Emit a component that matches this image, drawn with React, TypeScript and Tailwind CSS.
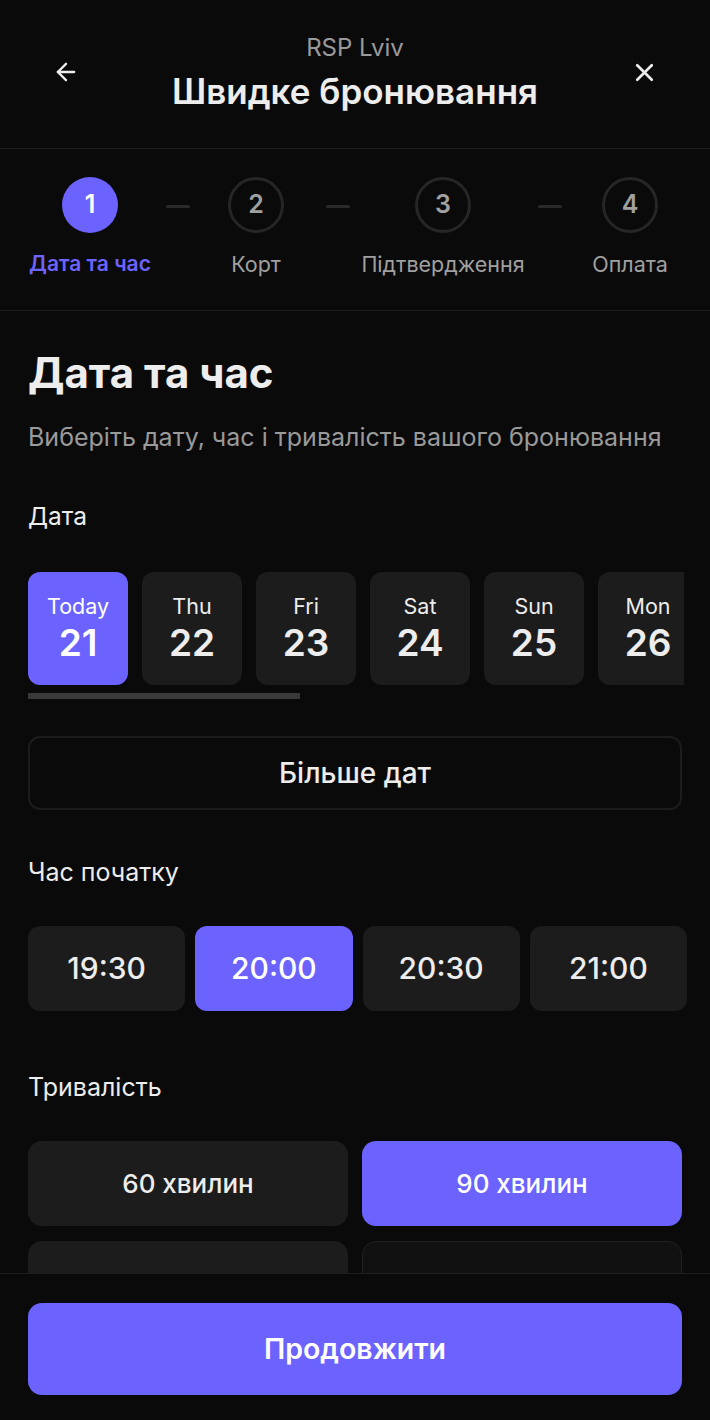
import { ArrowLeft, X } from "lucide-react";

const steps = [
  { n: 1, label: "Дата та час", w: "w-[122px]", ml: "" },
  { n: 2, label: "Корт", w: "w-[80px]", ml: "ml-[26px]" },
  { n: 3, label: "Підтвердження", w: "w-[170px]", ml: "ml-[8px]" },
  { n: 4, label: "Оплата", w: "w-[78px]", ml: "ml-[29px]" },
];
const dashMl = ["ml-[15px]", "ml-[30px]", "ml-[10px]"];

const dates = [
  { day: "Today", num: 21, active: true },
  { day: "Thu", num: 22 },
  { day: "Fri", num: 23 },
  { day: "Sat", num: 24 },
  { day: "Sun", num: 25 },
  { day: "Mon", num: 26 },
  { day: "Tue", num: 27 },
];

const times = ["19:30", "20:00", "20:30", "21:00"];

export default function App() {
  return (
    <div className="h-[1420px] w-[710px] flex flex-col overflow-hidden bg-[#0a0a0a] text-[#ededed] font-['Inter',sans-serif]">
      {/* Header */}
      <header className="h-[149px] shrink-0 border-b border-[#1f1f1f] flex items-center px-[42px] pb-[4px]">
        <button className="w-[48px] h-[48px] flex items-center justify-center text-[#ededed]">
          <ArrowLeft size={28} strokeWidth={2} />
        </button>
        <div className="flex-1 flex flex-col items-center">
          <span className="text-[24px] leading-[30px] text-[#9a9a9a]">RSP Lviv</span>
          <h1 className="text-[35px] leading-[42px] font-semibold mt-[7px]">Швидке бронювання</h1>
        </div>
        <button className="w-[48px] h-[48px] flex items-center justify-center text-[#ededed]">
          <X size={29} strokeWidth={2.2} />
        </button>
      </header>

      {/* Stepper */}
      <div className="h-[162px] shrink-0 border-b border-[#1f1f1f] flex items-start pl-[29px] pt-[28px]">
        {steps.map((s, i) => (
          <div key={s.n} className="flex items-start">
            {i > 0 && <div className={`${dashMl[i - 1]} mt-[28px] w-[24px] h-[3px] bg-[#2a2a2a] rounded`} />}
            <div className={`${s.w} ${s.ml} flex flex-col items-center`}>
              <div
                className={
                  s.n === 1
                    ? "w-[56px] h-[56px] rounded-full bg-[#6c63ff] text-white flex items-center justify-center text-[25px] font-semibold"
                    : "w-[56px] h-[56px] rounded-full border-[3px] border-[#262626] text-[#a0a0a0] flex items-center justify-center text-[25px] font-semibold"
                }
              >
                {s.n}
              </div>
              <span
                className={
                  s.n === 1
                    ? "mt-[16px] text-[21px] leading-[30px] font-semibold text-[#6c63ff] whitespace-nowrap"
                    : "mt-[16px] text-[21.5px] leading-[30px] text-[#a0a0a0] whitespace-nowrap"
                }
              >
                {s.label}
              </span>
            </div>
          </div>
        ))}
      </div>

      {/* Content */}
      <main className="flex-1 overflow-hidden px-[28px] pt-[36px]">
        <h2 className="text-[42px] leading-[52px] font-bold">Дата та час</h2>
        <p className="mt-[22px] text-[25px] leading-[32px] text-[#9a9a9a]">
          Виберіть дату, час і тривалість вашого бронювання
        </p>

        <h3 className="mt-[47px] text-[24.5px] leading-[32px] text-[#ededed]">Дата</h3>

        <div className="mt-[40px] w-[656px] overflow-hidden">
          <div className="flex gap-[14px]">
            {dates.map((d) => (
              <div
                key={d.num}
                className={
                  d.active
                    ? "w-[100px] h-[113px] shrink-0 rounded-[12px] bg-[#6c63ff] text-white flex flex-col items-center justify-center"
                    : "w-[100px] h-[113px] shrink-0 rounded-[12px] bg-[#1c1c1c] text-[#ededed] flex flex-col items-center justify-center"
                }
              >
                <span className="text-[21.5px] leading-[26px]">{d.day}</span>
                <span className="text-[37px] leading-[42px] font-semibold mt-[3px]">{d.num}</span>
              </div>
            ))}
          </div>
          <div className="mt-[8px] w-[272px] h-[6px] bg-[#3a3a3a]" />
        </div>

        <button className="mt-[37px] w-full h-[74px] rounded-[12px] border-2 border-[#1c1c1c] text-[28px] font-medium text-[#ededed]">
          Більше дат
        </button>

        <h3 className="mt-[46px] text-[25px] leading-[32px] text-[#ededed]">Час початку</h3>

        <div className="mt-[38px] w-[659px] grid grid-cols-4 gap-[10px]">
          {times.map((t) => (
            <div
              key={t}
              className={
                t === "20:00"
                  ? "h-[85px] rounded-[12px] bg-[#6c63ff] text-white flex items-center justify-center text-[30px] font-medium"
                  : "h-[85px] rounded-[12px] bg-[#1c1c1c] text-[#ededed] flex items-center justify-center text-[30px] font-medium"
              }
            >
              {t}
            </div>
          ))}
        </div>

        <h3 className="mt-[60px] text-[25px] leading-[32px] text-[#ededed]">Тривалість</h3>

        <div className="mt-[38px] grid grid-cols-2 gap-x-[14px] gap-y-[15px]">
          <div className="h-[85px] rounded-[14px] bg-[#1c1c1c] text-[#ededed] flex items-center justify-center text-[26px] font-medium">
            60 хвилин
          </div>
          <div className="h-[85px] rounded-[14px] bg-[#6c63ff] text-white flex items-center justify-center text-[26px] font-medium">
            90 хвилин
          </div>
          <div className="h-[85px] rounded-[14px] bg-[#1c1c1c] text-[#ededed] flex items-center justify-center text-[26px] font-medium">
            120 хвилин
          </div>
          <div className="h-[85px] rounded-[14px] bg-[#111111] border border-[#222222] text-[#555555] flex items-center justify-center text-[26px] font-medium">
            150 хвилин
          </div>
        </div>
      </main>

      {/* Footer */}
      <footer className="h-[147px] shrink-0 border-t border-[#1f1f1f] bg-[#0a0a0a] px-[28px] pt-[29px]">
        <button className="w-full h-[92px] rounded-[14px] bg-[#6c63ff] text-white text-[28.5px] font-semibold">
          Продовжити
        </button>
      </footer>
    </div>
  );
}
